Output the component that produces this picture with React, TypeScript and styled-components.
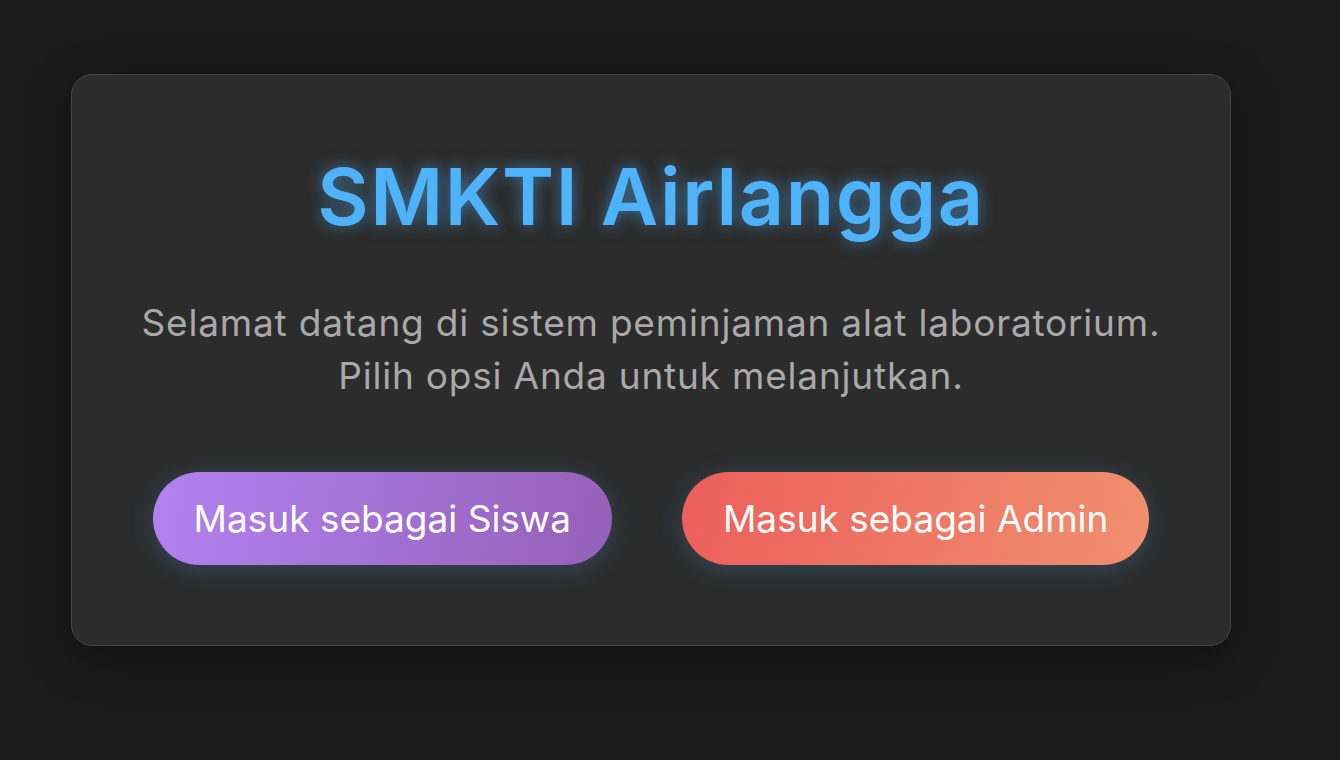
import React from "react";
import styled, { createGlobalStyle } from "styled-components";

const GlobalStyle = createGlobalStyle`
  html, body {
    margin: 0;
    padding: 0;
    background: #1b1b1b;
    font-family: "Inter", "Noto Sans", sans-serif;
  }
  * { box-sizing: border-box; }
`;

const Page = styled.main`
  min-height: 100vh;
  padding: 74px 0 0 71px;
`;

const Card = styled.section`
  width: 1160px;
  height: 572px;
  background: #2c2c2c;
  border: 1px solid #454545;
  border-radius: 21px;
  box-shadow: 0 12px 44px rgba(0, 0, 0, 0.45);
  padding: 71px 20px 0;
  display: flex;
  flex-direction: column;
  align-items: center;
  text-align: center;
`;

const Title = styled.h1`
  margin: 0;
  font-size: 79px;
  line-height: 100px;
  font-weight: 600;
  letter-spacing: 1.6px;
  color: #4fb3fb;
  text-shadow: 0 0 16px rgba(79, 179, 251, 0.55);
`;

const Subtitle = styled.p`
  margin: 50px 0 0;
  font-size: 37px;
  line-height: 53px;
  font-weight: 400;
  letter-spacing: 0.8px;
  color: #a9a9a9;
`;

const Actions = styled.div`
  margin-top: 70px;
  display: flex;
  justify-content: center;
  gap: 70px;
`;

const Button = styled.button<{ $from: string; $to: string }>`
  height: 93px;
  padding: 0 41px;
  border: none;
  border-radius: 47px;
  background: linear-gradient(100deg, ${(p) => p.$from}, ${(p) => p.$to});
  color: #ffffff;
  font-family: "Inter", "Noto Sans", sans-serif;
  font-size: 37px;
  font-weight: 400;
  cursor: pointer;
  box-shadow: 0 4px 24px rgba(79, 179, 251, 0.22);
`;

export default function App() {
  return (
    <>
      <GlobalStyle />
      <Page>
        <Card>
          <Title>SMKTI Airlangga</Title>
          <Subtitle>
            Selamat datang di sistem peminjaman alat laboratorium.
            <br />
            Pilih opsi Anda untuk melanjutkan.
          </Subtitle>
          <Actions>
            <Button $from="#b282f1" $to="#9560b7">Masuk sebagai Siswa</Button>
            <Button $from="#ec5f5b" $to="#f0906f">Masuk sebagai Admin</Button>
          </Actions>
        </Card>
      </Page>
    </>
  );
}
